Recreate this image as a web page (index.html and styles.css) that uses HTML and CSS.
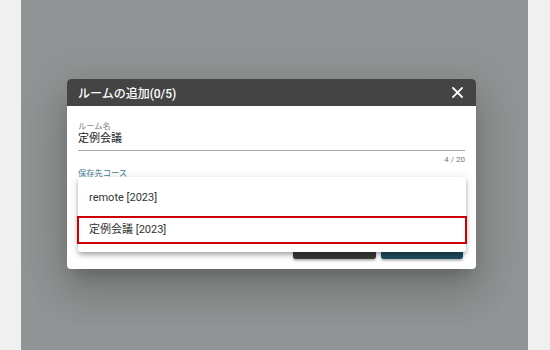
FILE: index.html
```html
<!DOCTYPE html>
<html>

<head>
    <meta charset="UTF-8">
    <title>ルームの追加</title>
    <link rel="stylesheet" href="styles.css">
</head>

<body>
    <div class="screen">
        <div class="dialog">
            <div class="dialog-header">
                <span class="dialog-title">ルームの追加(0/5)</span>
                <svg class="close" width="11" height="11" viewBox="0 0 11 11">
                    <path d="M1 1 L10 10 M10 1 L1 10" stroke="#fff" stroke-width="1.8" stroke-linecap="square"/>
                </svg>
            </div>
            <div class="dialog-body">
                <div class="field">
                    <div class="field-label">ルーム名</div>
                    <div class="field-value">定例会議</div>
                </div>
                <div class="counter">4 / 20</div>
                <div class="field select">
                    <div class="field-label active">保存先コース</div>
                    <div class="field-value"></div>
                </div>
                <div class="actions">
                    <button class="btn btn-dark">キャンセル</button>
                    <button class="btn btn-teal">追加</button>
                </div>
            </div>
            <!-- ドロップダウン -->
            <div class="menu">
                <div class="menu-item">remote [2023]</div>
                <div class="menu-item selected">定例会議 [2023]</div>
            </div>
        </div>
    </div>
</body>

</html>
```

FILE: styles.css
```css
body {
    margin: 0;
    background-color: #f0f0f0;
    font-family: Roboto, "Noto Sans CJK JP", sans-serif;
}

.screen {
    margin-left: 21px;
    width: 507px;
    height: 350px;
    background-color: #919494;
    overflow: hidden;
    padding-top: 79px;
    box-sizing: border-box;
}

.dialog {
    position: relative;
    margin-left: 46px;
    width: 409px;
    height: 190px;
    background-color: #fff;
    border-radius: 4px;
    box-shadow: 0 11px 15px -7px rgba(0, 0, 0, 0.2), 0 24px 38px 3px rgba(0, 0, 0, 0.12), 0 9px 46px 8px rgba(0, 0, 0, 0.1);
}

.dialog-header {
    height: 27px;
    background-color: #444;
    border-radius: 4px 4px 0 0;
    display: flex;
    align-items: center;
    justify-content: space-between;
    padding: 0 13px 0 11px;
}

.dialog-title {
    color: #fff;
    font-size: 12px;
    font-weight: 500;
}

.close {
    display: block;
}

.dialog-body {
    padding: 15px 11px 0 11px;
}

.field-label {
    font-size: 8.25px;
    line-height: 10px;
    color: #888;
}

.field-label.active {
    color: #3e7d8f;
}

.field-value {
    height: 16px;
    font-size: 11px;
    line-height: 16px;
    color: #222;
    padding-bottom: 3px;
    border-bottom: 1px solid #a8a8a8;
}

.counter {
    margin-top: 4px;
    font-size: 8px;
    line-height: 10px;
    color: #777;
    text-align: right;
}

.select {
    margin-top: 3px;
}

.select .field-value {
    margin-top: 5px;
}

.actions {
    display: flex;
    justify-content: flex-end;
    gap: 5px;
    margin-top: 26px;
    padding-right: 2px;
}

.btn {
    width: 83px;
    height: 30px;
    border: none;
    border-radius: 3px;
    color: #fff;
    font-size: 11px;
    font-family: Roboto, "Noto Sans CJK JP", sans-serif;
    box-shadow: 0 2px 2px rgba(0, 0, 0, 0.25);
}

.btn-dark {
    background-color: #3a3a3a;
}

.btn-teal {
    width: 82px;
    background-color: #1f4e5f;
}

.menu {
    position: absolute;
    left: 11px;
    top: 98px;
    width: 388px;
    padding: 5px 0 6px 0;
    background-color: #fff;
    border-radius: 3px;
    box-shadow: 0 2px 4px -1px rgba(0, 0, 0, 0.2), 0 4px 5px rgba(0, 0, 0, 0.14), 0 1px 10px rgba(0, 0, 0, 0.12);
}

.menu-item {
    height: 32px;
    line-height: 32px;
    padding-left: 11px;
    font-size: 11px;
    color: #333;
}

.menu-item.selected {
    height: 24px;
    line-height: 24px;
    margin: 2px -1px;
    padding-left: 10px;
    border: 2px solid #cc0000;
}
```
